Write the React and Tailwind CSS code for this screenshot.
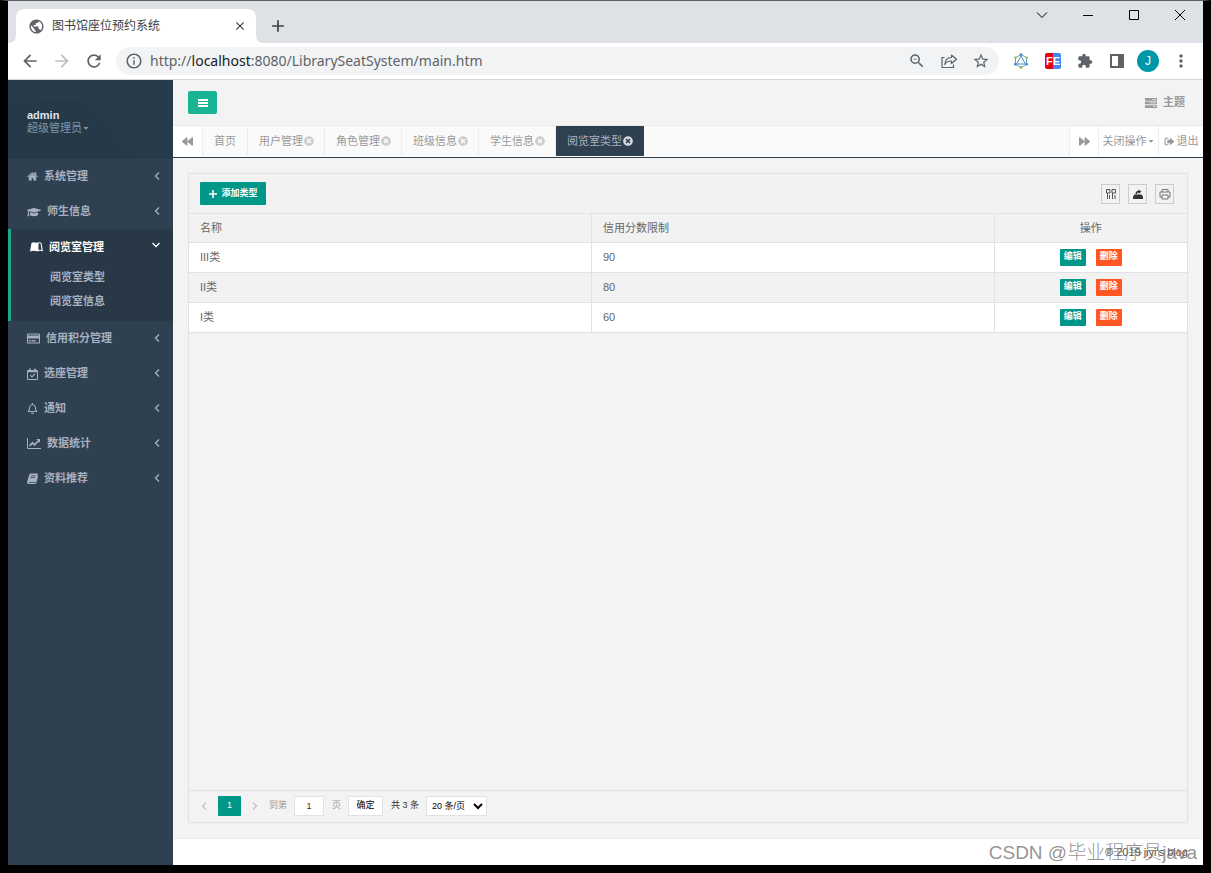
import React from "react";
import {
  FaGraduationCap,
  FaRegCreditCard,
  FaRegBell,
  FaBackward,
  FaForward,
  FaTimesCircle,
  FaCaretDown,
} from "react-icons/fa";
import {
  MdArrowBack,
  MdArrowForward,
  MdRefresh,
  MdInfoOutline,
  MdOutlineZoomOut,
  MdPublic,
  MdStarBorder,
  MdExtension,
  MdMoreVert,
  MdClose,
  MdAdd,
} from "react-icons/md";

function Home() {
  return (
    <svg viewBox="90 200 1610 1400" className="h-[9px] w-[11px]" fill="currentColor">
      <path d="M1472 992v480q0 26-19 45t-45 19h-384v-384h-256v384h-384q-26 0-45-19t-19-45v-480q0-1 .5-3t.5-3l575-474 575 474q1 2 1 6zm223-69l-62 74q-8 9-21 11h-3q-13 0-21-7l-692-577-692 577q-12 8-24 7-13-2-21-11l-62-74q-8-10-7-23.5t11-21.5l719-599q32-26 76-26t76 26l244 204v-195q0-14 9-23t23-9h192q14 0 23 9t9 23v408l219 182q10 8 11 21.5t-7 23.5z" />
    </svg>
  );
}

function BookOpen() {
  return (
    <svg viewBox="0 0 26 20" className="h-[10px] w-[13px]" fill="currentColor">
      <path d="M3 2C6 0 10 0 13 2V19C10 17 5 17 0 19Z" />
      <path
        d="M12 2C15 0 20 0 23 2L26 19C22 17 18 17 15 19L12 17ZM17 3V16C19 15.2 21 15.2 23.200 15.800L21.200 3.300C20 2.600 18 2.600 17 3Z"
        fillRule="evenodd"
      />
    </svg>
  );
}

function CreditCard() {
  return <FaRegCreditCard className="size-[13px]" />;
}

function Cap() {
  return <FaGraduationCap className="size-[14px]" />;
}

function CalendarCheck() {
  return (
    <svg viewBox="0 0 11 12" className="h-3 w-[11px]" fill="none" stroke="currentColor">
      <path d="M.5 2.500H10.500V11.500H.5Z" />
      <path d="M1 3.500H10M3 .5V3M8 .5V3" strokeWidth="1.600" />
      <path d="M3.200 7.200L5 9L8 5.800" strokeWidth="1.200" />
    </svg>
  );
}

function Bell() {
  return <FaRegBell className="size-[11px]" />;
}

function LineChart() {
  return (
    <svg viewBox="0 0 14 11" className="h-[11px] w-[14px]" fill="none" stroke="currentColor">
      <path d="M.5 0V10.500H14" />
      <path d="M2.500 8L5.500 4.800L7.500 6.800L11.500 2.800" strokeWidth="1.700" />
      <path d="M9.300 1H13V4.700Z" fill="currentColor" stroke="none" />
    </svg>
  );
}

function Book() {
  return (
    <svg viewBox="0 0 11 11" className="size-[11px]" fill="currentColor">
      <path d="M3.500.5H10.200Q11 .6 10.800 1.500L8.800 8.500Q8.500 9.300 7.600 9.300H1.800Q1.300 9.600 2 10H8.300L10.600 2.800Q11.300 3.200 11 4L9.200 10.200Q8.900 11 8.100 11H1.600Q0 10.700 0 9.200L2.300 1.500Q2.600.6 3.500.5ZM4.200 2.500L4 3.200H8.600L8.800 2.500ZM3.700 4.300L3.500 5H8.100L8.300 4.300Z" fillRule="evenodd" />
    </svg>
  );
}

function Angle({ className }) {
  return (
    <svg viewBox="0 0 6 10" className={className} fill="none" stroke="currentColor" strokeWidth="1.300">
      <path d="M5 1.500L1.500 5L5 8.500" />
    </svg>
  );
}

function Tasks() {
  return (
    <svg viewBox="0 0 12 10" className="h-[10px] w-3" fill="currentColor">
      <path
        d="M0 0H12V2.700H0ZM7.500 1V1.700H11V1ZM0 3.600H12V6.300H0ZM4.500 4.600V5.300H11V4.600ZM0 7.200H12V9.900H0ZM8.500 8.200V8.900H11V8.200Z"
        fillRule="evenodd"
      />
    </svg>
  );
}

function SignOut() {
  return (
    <svg viewBox="0 0 20 16" className="h-[9px] w-[11px]" fill="currentColor">
      <path d="M8 1H4Q1 1 1 4V12Q1 15 4 15H8V13H4Q3 13 3 12V4Q3 3 4 3H8Z" />
      <path d="M6 5H11V1L19 8L11 15V11H6Z" />
    </svg>
  );
}

const menus = [
  { name: "系统管理", icon: Home },
  { name: "师生信息", icon: Cap },
  {
    name: "阅览室管理",
    icon: BookOpen,
    children: ["阅览室类型", "阅览室信息"],
  },
  { name: "信用积分管理", icon: CreditCard },
  { name: "选座管理", icon: CalendarCheck },
  { name: "通知", icon: Bell },
  { name: "数据统计", icon: LineChart },
  { name: "资料推荐", icon: Book },
];

const tabs = ["用户管理", "角色管理", "班级信息", "学生信息", "阅览室类型"];

const rows = [
  { name: "III类", score: 90 },
  { name: "II类", score: 80 },
  { name: "I类", score: 60 },
];

function TabStrip() {
  return (
    <div className="flex h-[42px] items-end justify-between bg-[#dee1e6]">
      <div className="flex items-end">
        <svg viewBox="0 0 8 8" className="size-2" fill="#fff">
          <path d="M0 8Q8 8 8 0V8Z" />
        </svg>
        <div className="flex h-[34px] w-60 items-center rounded-t-lg bg-white pr-[9px] pl-3 text-[#3c4043]">
          <MdPublic className="size-[17px] text-[#5f6368]" />
          <span className="ml-[7px] flex-1 text-xs">图书馆座位预约系统</span>
          <button aria-label="关闭标签页">
            <MdClose className="size-[14px]" />
          </button>
        </div>
        <svg viewBox="0 0 8 8" className="size-2" fill="#fff">
          <path d="M8 8Q0 8 0 0V8Z" />
        </svg>
        <button aria-label="新标签页" className="mb-[7px] ml-1 text-[#3c4043]">
          <MdAdd className="size-5" />
        </button>
      </div>
      <div className="flex self-start text-black">
        <button aria-label="搜索标签页" className="flex h-7 w-[46px] items-center justify-center">
          <svg viewBox="0 0 12 12" className="size-3" fill="none" stroke="currentColor">
            <path d="M1 3.500L6 8.500L11 3.500" />
          </svg>
        </button>
        <button aria-label="最小化" className="flex h-7 w-[46px] items-center justify-center">
          <svg viewBox="0 0 12 12" className="size-3" fill="none" stroke="currentColor">
            <path d="M1 6.500H11" />
          </svg>
        </button>
        <button aria-label="最大化" className="flex h-7 w-[46px] items-center justify-center">
          <svg viewBox="0 0 12 12" className="size-3" fill="none" stroke="currentColor">
            <path d="M1.500 1.500H10.500V10.500H1.500Z" />
          </svg>
        </button>
        <button aria-label="关闭" className="flex h-7 w-[46px] items-center justify-center">
          <svg viewBox="0 0 12 12" className="size-3" fill="none" stroke="currentColor">
            <path d="M1 1L11 11M11 1L1 11" />
          </svg>
        </button>
      </div>
    </div>
  );
}

function Toolbar() {
  return (
    <div className="flex h-[37px] items-center border-b border-[#d5d7da] bg-white px-3 text-[#5f6368]">
      <button aria-label="后退">
        <MdArrowBack className="size-5" />
      </button>
      <button aria-label="前进" className="ml-3 text-[#bdbfc2]">
        <MdArrowForward className="size-5" />
      </button>
      <button aria-label="刷新" className="ml-3">
        <MdRefresh className="size-5" />
      </button>
      <div className="ml-3 flex h-7 flex-1 items-center rounded-full bg-[#f1f3f4] pr-[9px] pl-[9px]">
        <MdInfoOutline className="size-[18px]" />
        <span className="ml-[7px] flex-1 font-['Noto_Sans'] text-sm">
          http://<span className="text-[#202124]">localhost</span>
          :8080/LibrarySeatSystem/main.htm
        </span>
        <div className="flex items-center gap-[14px]">
          <MdOutlineZoomOut className="size-[18px]" />
          <svg viewBox="-1 -1 18 18" className="size-[18px]" fill="none" stroke="currentColor" strokeWidth="1.200">
            <path d="M3.500 4.500H1V14.500H12.500V11.500" />
            <path
              d="M10.500 2L15.500 6.200L10.500 10.500V8C7.500 8 5.200 9 3.800 11.500C4 7.500 6.500 4.700 10.500 4.500Z"
              strokeLinejoin="round"
            />
          </svg>
          <MdStarBorder className="size-[18px]" />
        </div>
      </div>
      <div className="ml-[14px] flex items-center gap-4">
        <svg viewBox="0 0 16 16" className="size-4" fill="none">
          <path d="M8 1.500L13.500 4.700V11.300L8 14.500L2.500 11.300V4.700Z" stroke="#6d9fc4" />
          <path d="M8 3L12.500 11H3.500Z" stroke="#4b8fc7" />
          <g fill="#8cc152">
            <circle cx="8" cy="14.500" r="1.400" />
            <circle cx="2.300" cy="4.700" r="1.300" />
            <circle cx="13.700" cy="4.700" r="1.300" />
          </g>
          <g fill="#3f88c5">
            <circle cx="8" cy="1.600" r="1.400" />
            <circle cx="2.300" cy="11.300" r="1.300" />
            <circle cx="13.700" cy="11.300" r="1.300" />
          </g>
        </svg>
        <span className="flex size-4 items-center justify-center rounded-xs bg-linear-to-r from-[#e60012] from-50% to-[#4285f4] to-50% text-[11px] font-bold text-white">
          FE
        </span>
        <MdExtension className="size-4" />
        <svg viewBox="0 0 16 16" className="size-4" fill="currentColor">
          <path d="M1 1H15V15H1ZM3 3V13H9V3Z" fillRule="evenodd" />
        </svg>
      </div>
      <span className="ml-3 flex size-[22px] items-center justify-center rounded-full bg-[#0097a7] text-xs text-white">
        J
      </span>
      <button aria-label="更多" className="ml-3">
        <MdMoreVert className="size-5" />
      </button>
    </div>
  );
}

function MenuItem({ menu }) {
  const Icon = menu.icon;
  const open = Boolean(menu.children);
  return (
    <li className={open ? "border-l-3 border-[#19aa8d] bg-[#293846] pb-2" : ""}>
      <a
        href="#"
        className={
          open
            ? "flex h-9 items-center pr-[14px] pl-[19px] font-bold text-white"
            : "flex h-[35px] items-center pr-[13px] pl-[19px] font-bold text-[#a7b1c2]"
        }
      >
        <Icon />
        <span className="ml-[6px] flex-1">{menu.name}</span>
        {open ? (
          <Angle className="mb-1 h-[10px] w-[6px] -rotate-90" />
        ) : (
          <Angle className="mb-[2px] h-[10px] w-[6px]" />
        )}
      </a>
      {open && (
        <ul>
          {menu.children.map((child) => (
            <li key={child}>
              <a href="#" className="flex h-6 items-center pl-[39px] font-semibold text-[#a7b1c2]">
                {child}
              </a>
            </li>
          ))}
        </ul>
      )}
    </li>
  );
}

function Sidebar() {
  return (
    <nav className="w-[165px] shrink-0 bg-[#2f4050]">
      <div className="relative h-[79px] overflow-hidden bg-[#263949]">
        <svg viewBox="0 0 165 79" className="absolute inset-0 size-full" preserveAspectRatio="none">
          <path d="M0 17L70 21L105 0H0Z" fill="#283b4b" />
          <path d="M78 20L105 0H165V79H132Z" fill="#283b4a" />
        </svg>
        <div className="relative px-[19px] pt-[29px]">
          <div className="leading-3 font-bold text-[#dfe4ed]">admin</div>
          <a href="#" className="flex items-center leading-[14px] text-[#8095a8]">
            超级管理员
            <FaCaretDown className="size-2" />
          </a>
        </div>
      </div>
      <ul>
        {menus.map((menu) => (
          <MenuItem key={menu.name} menu={menu} />
        ))}
      </ul>
    </nav>
  );
}

function PageTabs() {
  return (
    <div className="flex h-8 border-b border-[#2f4050] bg-[#fafafa] pb-px text-[#999]">
      <button aria-label="向左" className="flex w-[30px] items-center justify-center border-r border-[#eee] bg-white">
        <FaBackward className="size-[11px]" />
      </button>
      <a href="#" className="flex items-center border-r border-[#eee] px-[11px]">
        首页
      </a>
      {tabs.map((tab) => (
        <a
          key={tab}
          href="#"
          className={
            tab === "阅览室类型"
              ? "flex items-center gap-px bg-[#2f4050] px-[11px] text-[#a7b1c2]"
              : "flex items-center gap-px border-r border-[#eee] pr-[10px] pl-[11px]"
          }
        >
          {tab}
          <FaTimesCircle
            className={tab === "阅览室类型" ? "size-[10px] text-[#d5d9dd]" : "size-[10px] text-[#ccc]"}
          />
        </a>
      ))}
      <div className="ml-auto flex bg-white">
        <button aria-label="向右" className="flex w-[30px] items-center justify-center border-x border-[#eee]">
          <FaForward className="size-[11px]" />
        </button>
        <button className="flex w-[60px] items-center justify-center border-r border-[#eee]">
          关闭操作
          <FaCaretDown className="size-2" />
        </button>
        <a href="#" className="flex w-11 items-center justify-center gap-[2px]">
          <SignOut />
          退出
        </a>
      </div>
    </div>
  );
}

function TypeTable() {
  return (
    <table className="w-full table-fixed border-collapse text-[#666]">
      <thead>
        <tr className="h-7 border-b border-[#e2e2e2] bg-[#f2f2f2]">
          <th className="border-r border-[#e2e2e2] px-[11px] text-left font-normal">名称</th>
          <th className="border-r border-[#e2e2e2] px-[11px] text-left font-normal">信用分数限制</th>
          <th className="w-[193px] text-center font-normal">操作</th>
        </tr>
      </thead>
      <tbody>
        {rows.map((row) => (
          <tr key={row.name} className="h-[30px] border-b border-[#e2e2e2] bg-white even:bg-[#f2f2f2]">
            <td className="border-r border-[#e2e2e2] px-[11px]">{row.name}</td>
            <td className="border-r border-[#e2e2e2] px-[11px]">{row.score}</td>
            <td>
              <div className="flex justify-center gap-[10px] text-[9px] font-bold text-white">
                <button className="h-[17px] w-[26px] rounded-[1px] bg-[#009688]">编辑</button>
                <button className="h-[17px] w-[26px] rounded-[1px] bg-[#ff5722]">删除</button>
              </div>
            </td>
          </tr>
        ))}
      </tbody>
    </table>
  );
}

function TableTools() {
  return (
    <div className="flex gap-2 text-[#555]">
      <button aria-label="筛选列" className="flex h-5 w-[19px] items-center justify-center border border-[#ccc]">
        <svg viewBox="0 0 12 12" className="size-3" fill="none" stroke="currentColor">
          <path d="M1.500 1.500H5V5H1.500ZM7 1.500H10.500V5H7ZM2.500 5V11M4.500 7V11M7.500 5V11M10 7V11" />
        </svg>
      </button>
      <button aria-label="导出" className="flex h-5 w-[19px] items-center justify-center border border-[#ccc]">
        <svg viewBox="0 0 12 12" className="size-3" fill="#333">
          <path d="M2.500 6.500H9.500L11 8.500V11H1V8.500Z" />
          <path d="M3.500 6C3.500 3.800 5 2.800 6.500 2.800V1.500L9.500 3.800L6.500 5.800V4.500C5.500 4.500 5 5 5 6Z" />
        </svg>
      </button>
      <button aria-label="打印" className="flex h-5 w-[19px] items-center justify-center border border-[#ccc]">
        <svg viewBox="0 0 12 12" className="size-3" fill="none" stroke="#777">
          <path d="M3 4V1.500H9V4M3 9H1V4H11V9H9M3 7H9V11H3Z" />
        </svg>
      </button>
    </div>
  );
}

function Pagination() {
  return (
    <div className="flex h-8 items-center border-t border-[#e2e2e2] pb-[2px] pl-3 text-[9px] text-[#333]">
      <button aria-label="上一页" className="text-[#c2c2c2]">
        <Angle className="h-[10px] w-[6px]" />
      </button>
      <button className="ml-[11px] h-5 w-[23px] rounded-[1px] bg-[#009688] text-white">1</button>
      <button aria-label="下一页" className="ml-[11px] text-[#c2c2c2]">
        <Angle className="h-[10px] w-[6px] rotate-180" />
      </button>
      <label htmlFor="page" className="ml-[11px] text-[#999]">
        到第
      </label>
      <input
        id="page"
        defaultValue="1"
        className="ml-[7px] h-5 w-[30px] border border-[#e2e2e2] bg-white text-center"
      />
      <span className="ml-2 text-[#999]">页</span>
      <button className="ml-[7px] h-5 w-[35px] border border-[#e2e2e2] bg-white text-black">确定</button>
      <span className="ml-2">共 3 条</span>
      <select
        aria-label="每页条数"
        className="ml-[7px] h-5 w-[61px] border border-[#e2e2e2] bg-white pl-px text-black"
      >
        <option>20 条/页</option>
      </select>
    </div>
  );
}

export default function App() {
  return (
    <div className="flex min-h-screen flex-col border-x-8 border-t border-b-8 border-black border-t-[#5f5f66] font-['Liberation_Sans','Noto_Sans_CJK_SC',sans-serif] text-[11px]">
      <TabStrip />
      <Toolbar />
      <div className="flex flex-1">
        <Sidebar />
        <div className="flex min-w-0 flex-1 flex-col bg-[#f3f3f4]">
          <header className="flex h-[46px] items-center justify-between border-b border-[#e7eaec] px-[15px] text-[#999]">
            <button
              aria-label="菜单"
              className="flex h-[23px] w-[29px] items-center justify-center rounded-xs bg-[#1ab394] text-white"
            >
              <svg viewBox="0 0 10 8" className="h-2 w-[10px]" fill="currentColor">
                <path d="M0 0H10V2H0ZM0 3H10V5H0ZM0 6H10V8H0Z" />
              </svg>
            </button>
            <a href="#" className="mr-[3px] flex items-center gap-[6px] font-semibold">
              <Tasks />
              主题
            </a>
          </header>
          <PageTabs />
          <main className="flex flex-1 flex-col p-[15px]">
            <div className="flex flex-1 flex-col border border-[#e2e2e2]">
              <div className="flex h-10 items-center justify-between border-b border-[#e2e2e2] bg-[#f2f2f2] pr-[13px] pl-[11px]">
                <button className="flex h-[23px] w-[66px] items-center justify-center gap-[3px] rounded-[1px] bg-[#009688] text-[9px] font-bold text-white">
                  <svg viewBox="0 0 10 10" className="size-[10px]" fill="none" stroke="currentColor" strokeWidth="1.600">
                    <path d="M5 1V9M1 5H9" />
                  </svg>
                  添加类型
                </button>
                <TableTools />
              </div>
              <div className="flex-1">
                <TypeTable />
              </div>
              <Pagination />
            </div>
          </main>
          <footer className="relative flex h-[27px] items-center justify-end border-t border-[#e7eaec] bg-white pr-[15px] text-[#555]">
            © 2019 jiyi's blog
            <span className="absolute right-[6px] bottom-0 text-[19px] leading-6 font-light whitespace-nowrap text-[#777]/80">
              CSDN @毕业程序员java
            </span>
          </footer>
        </div>
      </div>
    </div>
  );
}
